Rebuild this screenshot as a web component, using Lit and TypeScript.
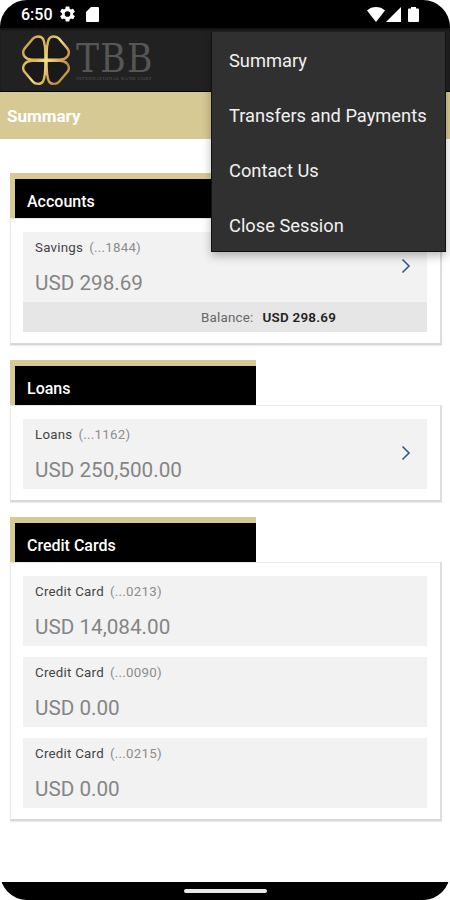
import { LitElement, html, css, svg, nothing } from "lit";
import { customElement, property } from "lit/decorators.js";

interface Account {
  name: string;
  mask: string;
  amount: string;
  link?: boolean;
  balance?: string;
}

@customElement("status-bar")
class StatusBar extends LitElement {
  static styles = css`
    :host { display: flex; height: 28px; box-sizing: border-box; background: #000; color: #fff; align-items: center; padding: 2px 31px 0 21px; }
    .time { font: 500 16px/24px Roboto, sans-serif; width: 39px; white-space: nowrap; }
    .space { flex: 1; }
    svg { display: block; fill: #fff; flex: none; }
    .card { margin-left: 11px; }
    .signal { margin-left: 1px; }
    .battery { margin-left: 7px; }
    .status { margin-top: -2px; }
  `;
  render() {
    return html`
      <span class="time">6:50</span>
      <svg class="status" width="15" height="16" viewBox="2.4 2 19.2 20"><path d="M19.14 12.94c.04-.3.06-.61.06-.94 0-.32-.02-.64-.07-.94l2.03-1.58a.5.5 0 0 0 .12-.61l-1.92-3.32a.49.49 0 0 0-.59-.22l-2.39.96a7 7 0 0 0-1.62-.94l-.36-2.54a.48.48 0 0 0-.48-.41h-3.84a.47.47 0 0 0-.47.41l-.36 2.54c-.59.24-1.13.57-1.62.94l-2.39-.96a.48.48 0 0 0-.59.22L2.74 8.87a.48.48 0 0 0 .12.61l2.03 1.58a6 6 0 0 0 0 1.88l-2.03 1.58a.5.5 0 0 0-.12.61l1.92 3.32c.12.22.37.29.59.22l2.39-.96c.5.38 1.03.7 1.62.94l.36 2.54c.05.24.24.41.48.41h3.84c.24 0 .44-.17.47-.41l.36-2.54a7 7 0 0 0 1.62-.94l2.39.96c.22.08.47 0 .59-.22l1.92-3.32a.48.48 0 0 0-.12-.61zM12 15.6a3.6 3.6 0 1 1 0-7.2 3.6 3.6 0 0 1 0 7.2z"/></svg>
      <svg class="card status" width="13" height="15" viewBox="0 0 13 15"><path d="M5 0h7a1 1 0 0 1 1 1v13a1 1 0 0 1-1 1H1a1 1 0 0 1-1-1V5z"/></svg>
      <span class="space"></span>
      <svg class="status" width="18" height="15" viewBox="0 0 18 15"><path d="M0 3.4C5 -1.1 13 -1.1 18 3.4L9 15z"/></svg>
      <svg class="signal status" width="15" height="15" viewBox="0 0 15 15"><path d="M15 0v15H0z"/></svg>
      <svg class="battery status" width="11" height="15" viewBox="0 0 11 15"><path d="M3 0h5v1.6h2a1 1 0 0 1 1 1V14a1 1 0 0 1-1 1H1a1 1 0 0 1-1-1V2.6a1 1 0 0 1 1-1h2z"/></svg>
    `;
  }
}

@customElement("brand-header")
class BrandHeader extends LitElement {
  static styles = css`
    :host { display: flex; height: 64px; box-sizing: border-box; background: #212121; border-bottom: 1.5px solid #050505; padding: 7px 0 0 21px; box-shadow: inset 0 2px 2px #151515; }
    svg { display: block; flex: none; }
    .words { margin-left: 5px; padding-top: 1px; display: flex; flex-direction: column; }
    .big { font: 38.5px/45px "DejaVu Serif Condensed", "DejaVu Serif", serif; font-stretch: condensed; color: #565656; white-space: nowrap; letter-spacing: 1.2px; }
    .small { font: 5px/6px "Liberation Serif", serif; color: #565656; white-space: nowrap; letter-spacing: 0.28px; margin-top: -5px; }
  `;
  render() {
    const leaf = "M24.5 24.8L11 24.6C4 24.4 1 19.5 2.6 15.2C3.4 13.2 8 8.6 11.8 3.8C14.5 .9 20 .7 22 3.9C24 7.4 24.5 14 24.5 24.8Z";
    return html`
      <svg width="50" height="51" viewBox="0 0 50 51">
        <defs>
          <linearGradient id="gold" gradientUnits="userSpaceOnUse" x1="0" y1="8" x2="50" y2="43">
            <stop offset="0" stop-color="#b98938"/><stop offset=".2" stop-color="#e0bd63"/>
            <stop offset=".36" stop-color="#d9b45b"/><stop offset=".5" stop-color="#f3e08c"/>
            <stop offset=".68" stop-color="#d6ab56"/><stop offset=".84" stop-color="#bd8a40"/><stop offset="1" stop-color="#d8b363"/>
          </linearGradient>
        </defs>
        <g fill="#191919" stroke="url(#gold)" stroke-width="2.4" stroke-linejoin="round">
          ${[0, 1].map((row) => [0, 1].map((col) => {
            const sx = col ? -1 : 1, sy = row ? -1 : 1;
            const map = leaf.replace(/(-?[\d.]+) (-?[\d.]+)/g, (_m, x, y) =>
              `${25 + sx * (Number(x) - 25)} ${25.2 + sy * (Number(y) - 25.2)}`);
            return svg`<path d=${map}/>`;
          }))}
        </g>
      </svg>
      <div class="words"><span class="big">TBB</span><span class="small">INTERNATIONAL BANK CORP</span></div>
    `;
  }
}

@customElement("account-section")
class AccountSection extends LitElement {
  @property() heading = "";
  @property({ attribute: false }) items: Account[] = [];
  static styles = css`
    :host { display: block; font-family: Roboto, sans-serif; }
    .head { width: 246px; height: 44.5px; box-sizing: border-box; background: #000; color: #fff; border: solid #d6c994; border-width: 6.5px 0 0 5px; font: 500 16px/20px Roboto, sans-serif; padding: 13px 0 0 12px; }
    .card { width: 432px; box-sizing: border-box; background: #fff; border: 1px solid #e8e8e8; border-right: 2px solid #dedede; border-bottom: 2px solid #d8d8d8; box-shadow: 0 1px 1px #ececec; padding: 13.25px 13px 11px 12px; display: flex; flex-direction: column; gap: 11.5px; }
    .row { background: #f2f2f2; height: 69.75px; box-sizing: border-box; padding: 6px 16px 0 12px; display: flex; }
    .info { flex: 1; }
    .name { font-size: 13.3px; line-height: 20px; letter-spacing: 0.25px; color: #444; display: flex; gap: 6px; white-space: nowrap; }
    .mask { color: #8d8d8d; }
    .amount { font-size: 20.7px; line-height: 26px; margin-top: 12px; color: #858585; white-space: nowrap; }
    .balance { background: #e6e6e6; height: 30px; display: flex; padding-left: 178px; gap: 9px; font-size: 13.4px; line-height: 31px; color: #666; letter-spacing: 0.2px; }
    b { color: #222; font-weight: 600; letter-spacing: 0.25px; }
    svg { display: block; margin-top: 20.5px; fill: none; stroke: #315a8c; stroke-width: 1.6; }
  `;
  render() {
    return html`
      <div class="head">${this.heading}</div>
      <div class="card">
        ${this.items.map((a) => html`<div>
          <div class="row">
            <div class="info">
              <div class="name"><span>${a.name}</span><span class="mask">${a.mask}</span></div>
              <div class="amount">${a.amount}</div>
            </div>
            ${a.link ? html`<svg width="10" height="16" viewBox="0 0 10 16"><path d="M1.5 1.5 8 8 1.5 14.5"/></svg>` : nothing}
          </div>
          ${a.balance ? html`<div class="balance"><span>Balance:</span><b>${a.balance}</b></div>` : nothing}
        </div>`)}
      </div>
    `;
  }
}

@customElement("app-root")
class AppRoot extends LitElement {
  static styles = css`
    :host { display: block; background: #fff; }
    .screen { position: relative; width: 450px; height: 900px; overflow: hidden; display: flex; flex-direction: column; background: #fff; border-radius: 27px; }
    .title { height: 46.5px; flex: none; box-sizing: border-box; background: #d6c994; color: #fff; font: 700 17px/24px Roboto, sans-serif; padding: 12px 0 0 7px; }
    main { flex: 1; display: flex; flex-direction: column; gap: 15.5px; padding: 34.7px 0 0 10px; }
    .nav { flex: none; height: 18px; background: #000; display: flex; justify-content: center; align-items: center; border-radius: 0 0 27px 27px; }
    .pill { width: 83px; height: 3.5px; border-radius: 2px; background: #ece9e9; }
    .menu { position: absolute; top: 32px; left: 211px; width: 235px; height: 220px; box-sizing: border-box; background: #303030; border: solid #111; border-width: 0 1px 1.5px 1px; box-shadow: 0 4px 9px rgba(0, 0, 0, 0.28); display: flex; flex-direction: column; padding: 1.4px 0 0 17px; }
    .menu span { height: 55px; font: 400 18.3px/55px Roboto, sans-serif; color: #f1f1f1; white-space: nowrap; }
  `;
  render() {
    const accounts: Account[] = [{ name: "Savings", mask: "(...1844)", amount: "USD 298.69", link: true, balance: "USD 298.69" }];
    const loans: Account[] = [{ name: "Loans", mask: "(...1162)", amount: "USD 250,500.00", link: true }];
    const cards: Account[] = [
      { name: "Credit Card", mask: "(...0213)", amount: "USD 14,084.00" },
      { name: "Credit Card", mask: "(...0090)", amount: "USD 0.00" },
      { name: "Credit Card", mask: "(...0215)", amount: "USD 0.00" },
    ];
    return html`
      <div class="screen">
        <status-bar></status-bar>
        <brand-header></brand-header>
        <div class="title">Summary</div>
        <main>
          <account-section heading="Accounts" .items=${accounts}></account-section>
          <account-section heading="Loans" .items=${loans}></account-section>
          <account-section heading="Credit Cards" .items=${cards}></account-section>
        </main>
        <div class="nav"><div class="pill"></div></div>
        <nav class="menu">
          ${["Summary", "Transfers and Payments", "Contact Us", "Close Session"].map((t) => html`<span>${t}</span>`)}
        </nav>
      </div>
    `;
  }
}
